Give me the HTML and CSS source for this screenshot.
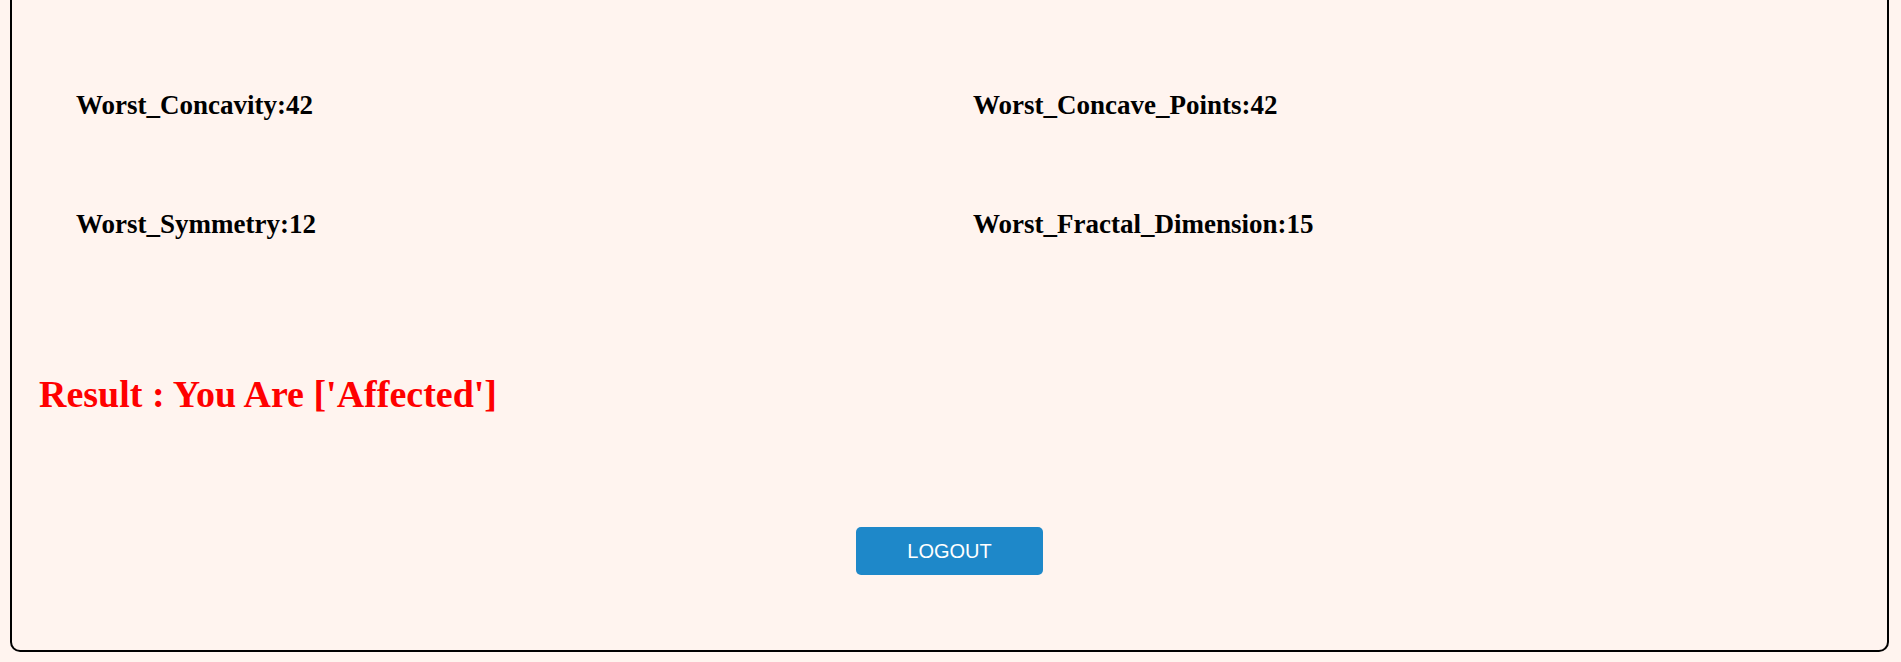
FILE: index.html
```html
<!DOCTYPE html>
<html>
<head>
<meta charset="utf-8">
<link rel="stylesheet" href="styles.css">
</head>
<body>
<div class="card">
  <div class="grid">
    <div class="field">Worst_Concavity:42</div>
    <div class="field">Worst_Concave_Points:42</div>
    <div class="field">Worst_Symmetry:12</div>
    <div class="field">Worst_Fractal_Dimension:15</div>
  </div>
  <h2 class="result">Result : You Are ['Affected']</h2>
  <div class="actions">
    <button class="logout">LOGOUT</button>
  </div>
</div>
</body>
</html>
```
FILE: styles.css
```css
html, body {
  margin: 0;
  padding: 0;
  background: #fff4ef;
}
body {
  padding: 0 12px 10px 10px;
  font-family: "Liberation Serif", serif;
}
.card {
  border: 2px solid #000;
  border-top: 0;
  border-radius: 0 0 10px 10px;
  background: #fff4ef;
  height: 652px;
  box-sizing: border-box;
}
.grid {
  display: grid;
  grid-template-columns: 897px 1fr;
  padding: 92px 0 0 64px;
  row-gap: 92px;
}
.field {
  font-weight: bold;
  font-size: 27px;
  line-height: 27px;
  color: #000;
}
.result {
  margin: 137px 0 0 27px;
  color: #ff0000;
  font-size: 38px;
  line-height: 38px;
  font-weight: bold;
}
.actions {
  display: flex;
  justify-content: center;
  padding-top: 114px;
}
.logout {
  width: 187px;
  height: 48px;
  background: #1e88c9;
  color: #fff;
  border: 0;
  border-radius: 5px;
  font-family: "Liberation Sans", Arial, sans-serif;
  font-size: 20px;
}
```
